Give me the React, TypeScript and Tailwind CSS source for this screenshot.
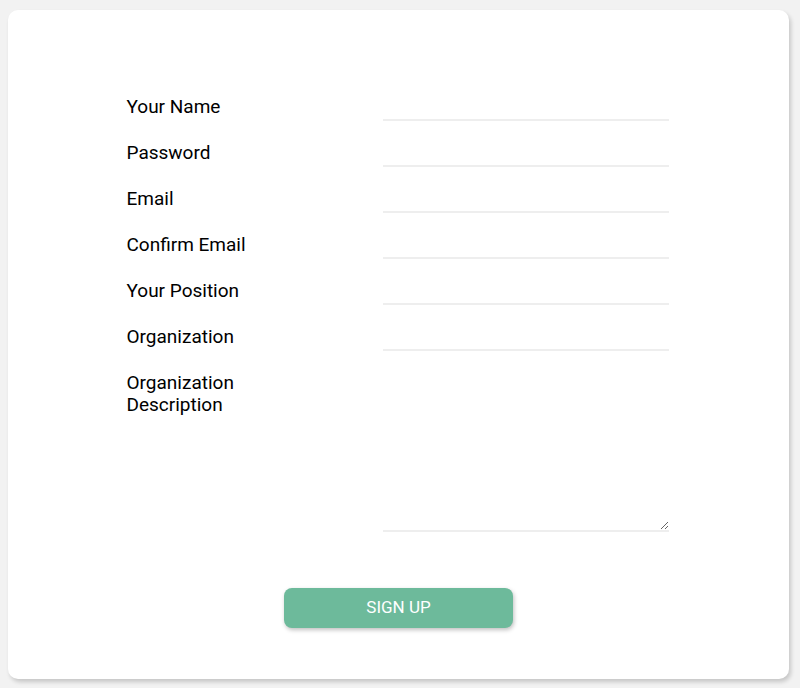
import React from 'react'

const fields = ['Your Name', 'Password', 'Email', 'Confirm Email', 'Your Position', 'Organization']

export default function App() {
  return (
    <div className="min-h-[688px] bg-[#f2f2f2] pt-[10px] pl-[8px] pr-[11px] pb-[9px] font-['Roboto',sans-serif]">
      <div className="h-[669px] rounded-[10px] bg-white shadow-[2px_3px_4px_rgba(0,0,0,0.18)] pt-[86px] flex flex-col items-center">
        <form className="mr-[2px] flex flex-col gap-[21px]" onSubmit={(e) => e.preventDefault()}>
          {fields.map((label) => (
            <div key={label} className="flex items-start">
              <label className="w-[256px] text-[19px] leading-[22px] text-black">{label}</label>
              <input
                type={label === 'Password' ? 'password' : 'text'}
                className="w-[286px] h-[25px] border-b-2 border-[#eeeeee] outline-none text-[16px]"
              />
            </div>
          ))}
          <div className="flex items-start">
            <label className="w-[256px] text-[19px] leading-[22px] text-black">
              Organization
              <br />
              Description
            </label>
            <textarea className="w-[286px] h-[160px] border-b-2 border-[#eeeeee] outline-none text-[16px]" />
          </div>
        </form>
        <button
          type="button"
          className="mt-[56px] w-[229px] h-[40px] rounded-[8px] bg-[#6dba9b] text-white text-[17px] uppercase shadow-[1px_2px_4px_rgba(0,0,0,0.25)]"
        >
          Sign up
        </button>
      </div>
    </div>
  )
}
